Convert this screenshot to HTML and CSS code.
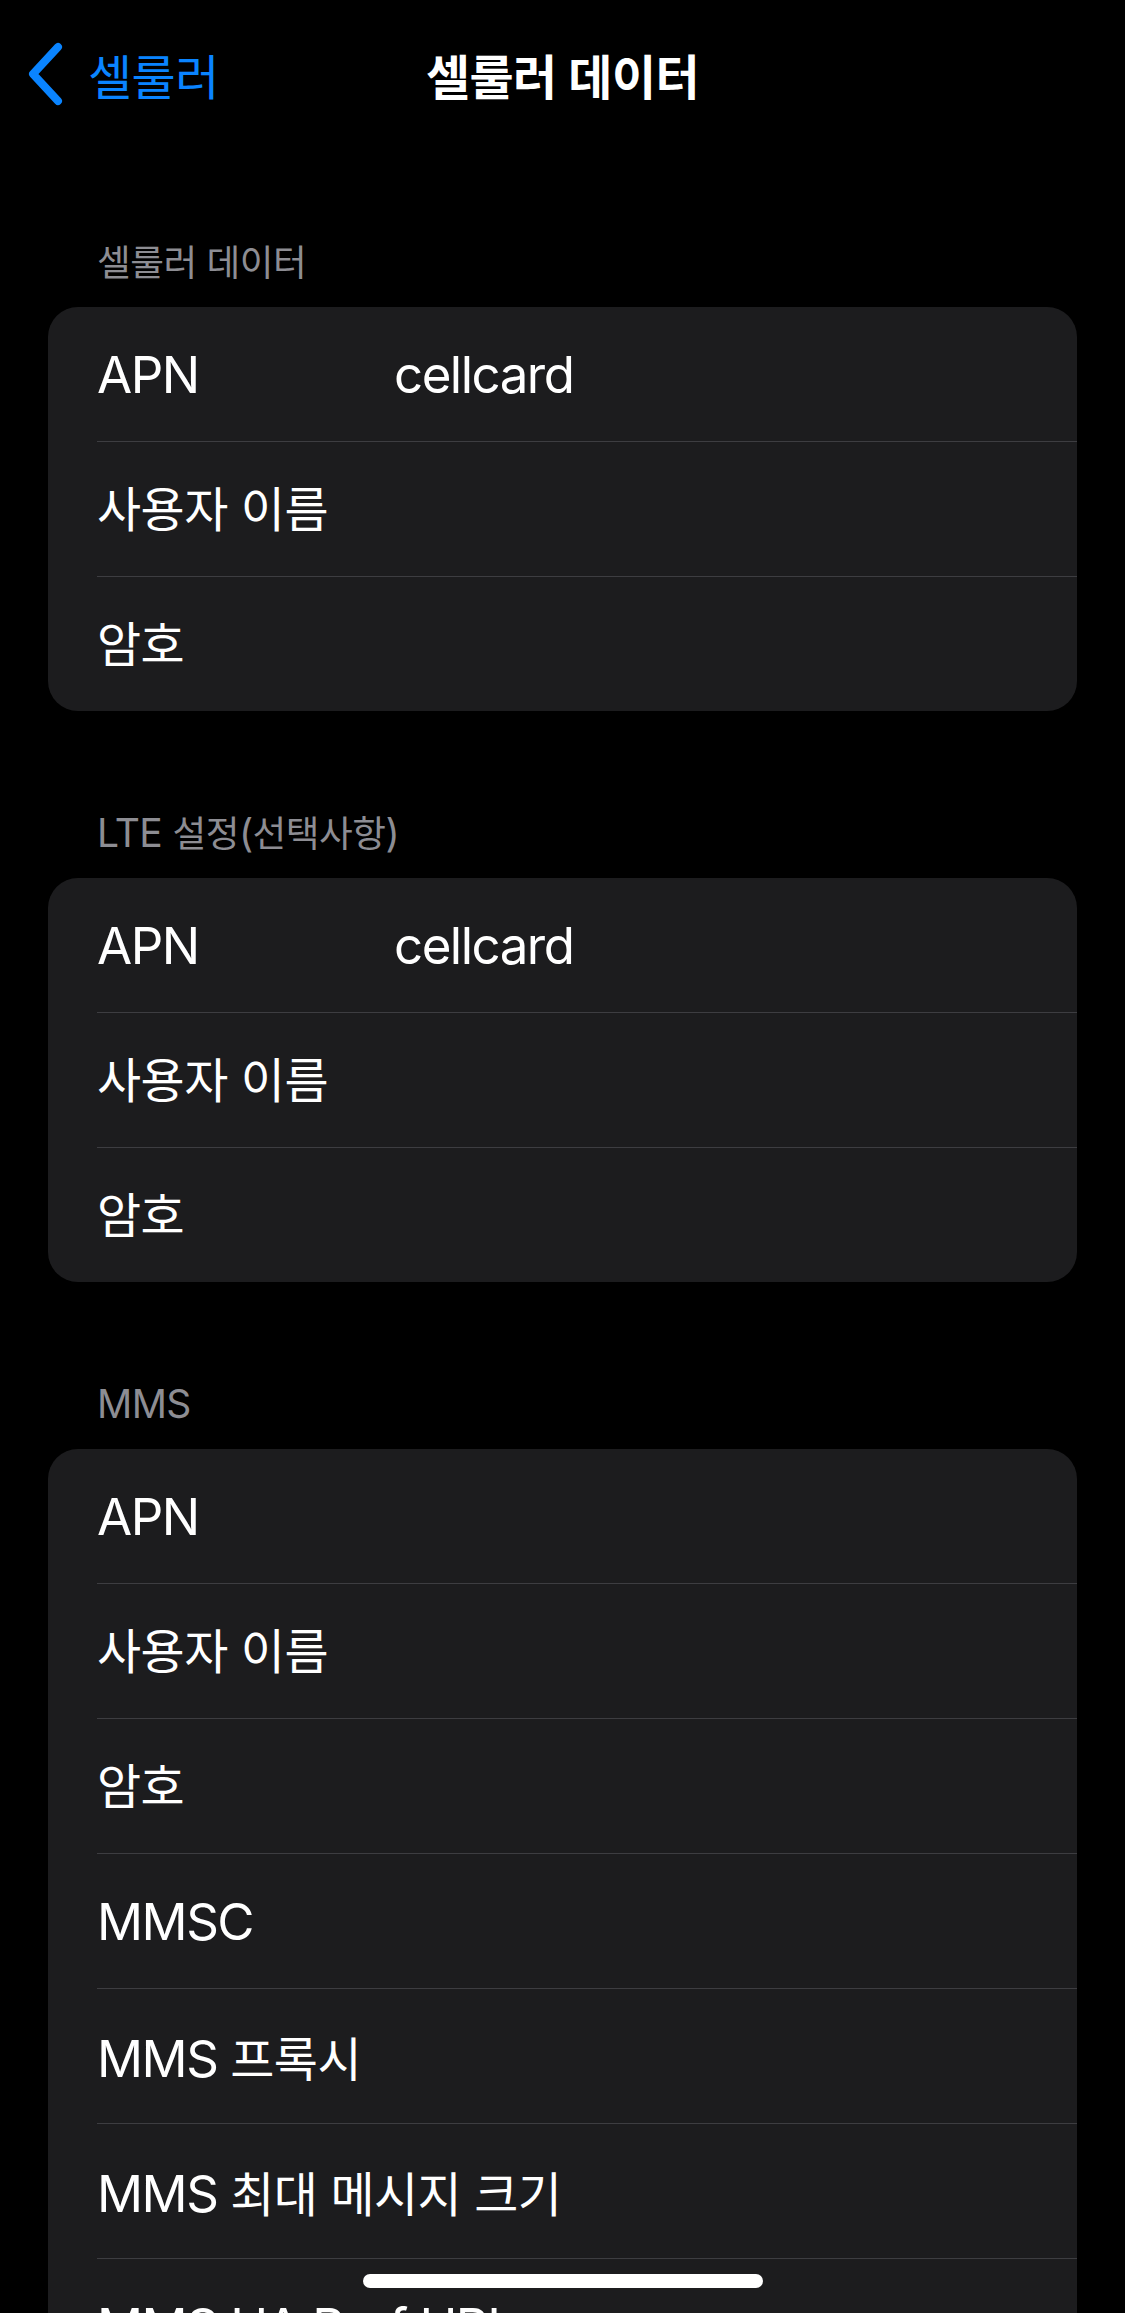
FILE: index.html
```html
<!DOCTYPE html>
<html lang="ko">
<head>
<meta charset="utf-8">
<title>셀룰러 데이터</title>
<link rel="stylesheet" href="styles.css">
</head>
<body>
<div class="screen">
  <header class="nav">
    <div class="back">
      <svg class="chev" width="40" height="64" viewBox="0 0 40 64" aria-hidden="true">
        <path d="M33 5 L8 32 L33 59" fill="none" stroke="#0a84ff" stroke-width="8" stroke-linecap="round" stroke-linejoin="round"/>
      </svg>
      <span class="ko">셀룰러</span>
    </div>
    <div class="title"><span class="ko">셀룰러 데이터</span></div>
    <div></div>
  </header>

  <section class="group first">
    <div class="group-header"><span class="ko">셀룰러 데이터</span></div>
    <div class="card">
      <div class="cell"><span class="label">APN</span><span class="value">cellcard</span></div>
      <div class="cell"><span class="label ko">사용자 이름</span></div>
      <div class="cell"><span class="label ko">암호</span></div>
    </div>
  </section>

  <section class="group">
    <div class="group-header">LTE <span class="ko">설정</span>(<span class="ko">선택사항</span>)</div>
    <div class="card">
      <div class="cell"><span class="label">APN</span><span class="value">cellcard</span></div>
      <div class="cell"><span class="label ko">사용자 이름</span></div>
      <div class="cell"><span class="label ko">암호</span></div>
    </div>
  </section>

  <section class="group">
    <div class="group-header">MMS</div>
    <div class="card">
      <div class="cell"><span class="label">APN</span></div>
      <div class="cell"><span class="label ko">사용자 이름</span></div>
      <div class="cell"><span class="label ko">암호</span></div>
      <div class="cell"><span class="label">MMSC</span></div>
      <div class="cell"><span class="label">MMS <span class="ko">프록시</span></span></div>
      <div class="cell"><span class="label">MMS <span class="ko">최대 메시지 크기</span></span></div>
      <div class="cell"><span class="label">MMS UA Prof URL</span></div>
    </div>
  </section>
</div>
<div class="home-indicator"></div>
</body>
</html>
```
FILE: styles.css
```css
html, body {
  margin: 0;
  padding: 0;
  background: #000;
}
body {
  font-family: "Inter", "Noto Sans CJK KR", sans-serif;
  color: #fff;
  overflow: hidden;
}
.screen {
  width: 1125px;
}
.ko {
  font-size: 0.94em;
  letter-spacing: -0.5px;
}
.nav {
  height: 148px;
  display: grid;
  grid-template-columns: 1fr auto 1fr;
  align-items: center;
  font-size: 51px;
  letter-spacing: -1.2px;
}
.back {
  display: flex;
  align-items: center;
  gap: 23px;
  padding-left: 25px;
  color: #0a84ff;
}
.chev {
  display: block;
  flex: none;
}
.title {
  font-weight: 600;
  color: #fff;
}
.group {
  margin-top: 99px;
}
.group.first {
  margin-top: 91px;
}
.group-header {
  padding-left: 97px;
  font-size: 39px;
  line-height: 46px;
  height: 46px;
  color: #8d8d93;
  margin-bottom: 22px;
  letter-spacing: -0.6px;
}
.card {
  margin: 0 48px;
  background: #1c1c1e;
  border-radius: 30px;
  overflow: hidden;
}
.cell {
  margin-left: 49px;
  height: 134px;
  display: flex;
  align-items: center;
  font-size: 51px;
  letter-spacing: -1.5px;
}
.cell + .cell {
  border-top: 1px solid #3d3d41;
}
.label {
  width: 297px;
  white-space: nowrap;
  flex: none;
}
.label.ko {
  padding-bottom: 6px;
}
.value {
  white-space: nowrap;
}
.home-indicator {
  position: fixed;
  left: 50%;
  top: 2274px;
  width: 400px;
  height: 14px;
  margin-left: -200px;
  border-radius: 7px;
  background: #fff;
}
```
